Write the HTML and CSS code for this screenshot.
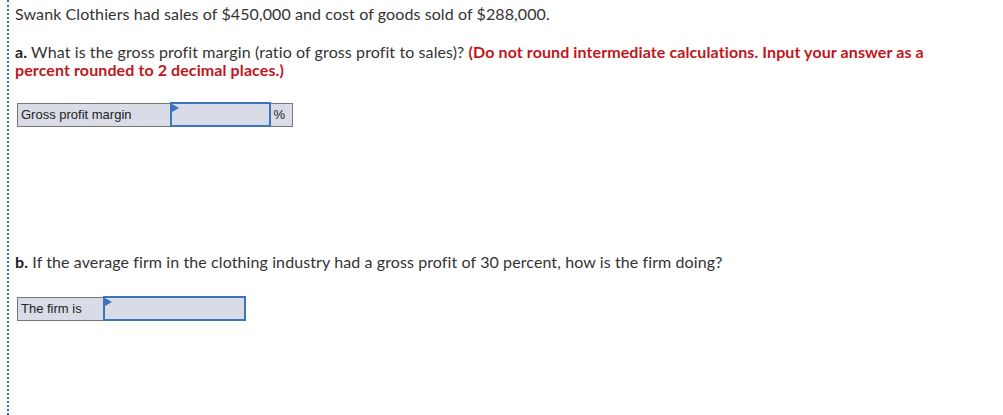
FILE: index.html
```html
<!DOCTYPE html>
<html lang="en">
<head>
    <meta charset="UTF-8">
    <title>Gross Profit Margin</title>
    <link rel="stylesheet" href="styles.css">
</head>
<body>
    <div class="question">
        <p class="intro">Swank Clothiers had sales of $450,000 and cost of goods sold of $288,000.</p>

        <p class="part"><b>a.</b> What is the gross profit margin (ratio of gross profit to sales)? <span class="note">(Do not round intermediate calculations. Input your answer as a percent rounded to 2 decimal places.)</span></p>

        <table class="answer answer-a">
            <tr>
                <td class="label">Gross profit margin</td>
                <td class="field"><span class="flag"></span></td>
                <td class="unit">%</td>
            </tr>
        </table>

        <p class="part part-b"><b>b.</b> If the average firm in the clothing industry had a gross profit of 30 percent, how is the firm doing?</p>

        <table class="answer answer-b">
            <tr>
                <td class="label">The firm is</td>
                <td class="field"><span class="flag"></span></td>
            </tr>
        </table>
    </div>
</body>
</html>
```

FILE: styles.css
```css
* {
    margin: 0;
    padding: 0;
    box-sizing: border-box;
}

body {
    background: white;
    font-family: Lato, "Open Sans", sans-serif;
    color: #333;
}

.question {
    margin-left: 7px;
    min-height: 415px;
    border-left: 2px dotted #2f6db5;
    padding: 5px 78px 0 6px;
    font-size: 16px;
    letter-spacing: 0.1px;
    line-height: 18px;
}

.intro {
    margin-bottom: 20px;
}

.part b {
    color: #222;
}

.note {
    color: #c0161c;
    font-weight: bold;
}

.answer {
    border-collapse: collapse;
    margin-left: 2px;
    font-family: "Liberation Sans", Arial, sans-serif;
    font-size: 13px;
    letter-spacing: 0;
    color: #222;
}

.answer td {
    background: #d9dce6;
    border: 1px solid #777;
    height: 23px;
    padding: 0 3px;
}

.answer-a {
    margin-top: 23px;
}

.answer-a .label {
    width: 153px;
}

.answer-a .field {
    width: 99px;
}

.answer-a .unit {
    width: 23px;
}

.answer .field {
    position: relative;
    border: 2px solid #3a75bd;
}

.flag {
    position: absolute;
    top: 0;
    left: 0;
    border-top: 4px solid transparent;
    border-bottom: 4px solid transparent;
    border-left: 7px solid #3a75bd;
}

.part-b {
    margin-top: 126px;
}

.answer-b {
    margin-top: 25px;
}

.answer-b .label {
    width: 86px;
}

.answer-b .field {
    width: 141px;
}
```
